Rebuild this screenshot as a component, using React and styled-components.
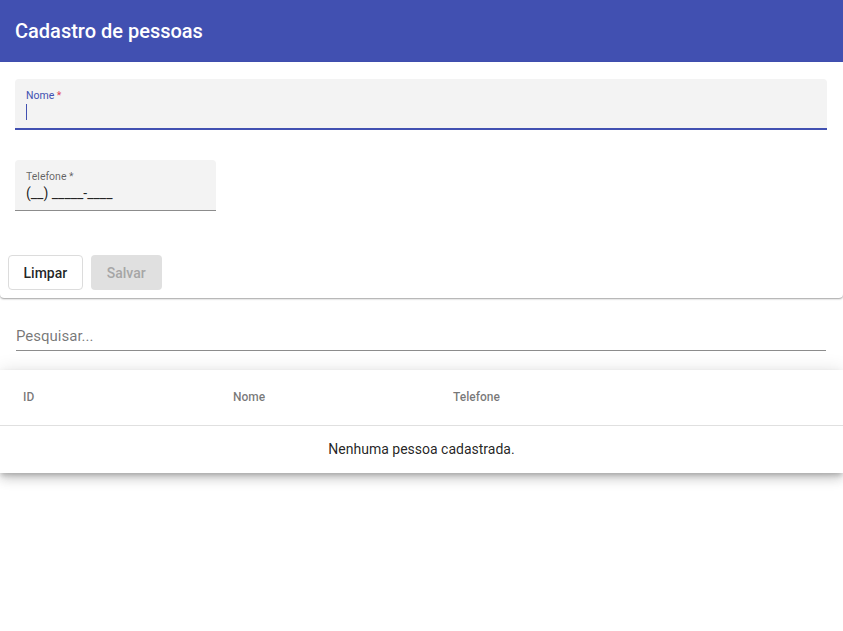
import styled, { createGlobalStyle } from 'styled-components';

const GlobalStyle = createGlobalStyle`
  body {
    margin: 0;
    font-family: Roboto, "Liberation Sans", sans-serif;
    background: #fff;
    color: rgba(0, 0, 0, 0.87);
  }

  #root {
    min-height: 100vh;
  }
`;

function App() {
  return (
    <>
      <GlobalStyle />
      <Header>
        <h1>Cadastro de pessoas</h1>
      </Header>

      <FormPaper>
        <Field $width="812px" $focused>
          <Label $focused>
            Nome <Star $focused>*</Star>
          </Label>
          <Value>
            <Caret />
          </Value>
        </Field>

        <Field $width="201px">
          <Label>
            Telefone <Star>*</Star>
          </Label>
          <Value>(__) _____-____</Value>
        </Field>

        <Actions>
          <Button>Limpar</Button>
          <Button $disabled>Salvar</Button>
        </Actions>
      </FormPaper>

      <Search>
        <span>Pesquisar...</span>
      </Search>

      <TablePaper>
        <HeadRow>
          <div>ID</div>
          <div>Nome</div>
          <div>Telefone</div>
        </HeadRow>
        <EmptyRow>Nenhuma pessoa cadastrada.</EmptyRow>
      </TablePaper>
    </>
  );
}

const Header = styled.header`
  height: 62px;
  background: #4150b1;
  display: flex;
  align-items: center;
  padding: 0 15px;

  h1 {
    margin: 0;
    color: #fff;
    font-size: 20px;
    font-weight: 500;
  }
`;

const FormPaper = styled.div`
  padding: 17px 8px 8px;
  border-radius: 0 0 4px 4px;
  background: #fff;
  box-shadow: 0 1px 1px -1px rgba(0, 0, 0, 0.3), 0 1px 2px rgba(0, 0, 0, 0.35);
  display: flex;
  flex-direction: column;
`;

const Field = styled.div`
  width: ${(p) => p.$width};
  height: 51px;
  box-sizing: border-box;
  margin: 0 0 30px 7px;
  background: #f3f3f3;
  border-radius: 4px 4px 0 0;
  border-bottom: ${(p) => (p.$focused ? '2px solid #4150b1' : '1px solid #8c8c8c')};
  padding: 10px 11px 0;
`;

const Label = styled.div`
  font-size: 10.5px;
  line-height: 13px;
  color: ${(p) => (p.$focused ? '#4150b1' : 'rgba(0, 0, 0, 0.6)')};
`;

const Star = styled.span`
  color: ${(p) => (p.$focused ? '#e0435a' : 'inherit')};
`;

const Value = styled.div`
  font-size: 14px;
  line-height: 18px;
  margin-top: 1px;
  height: 18px;
  color: rgba(0, 0, 0, 0.87);
`;

const Caret = styled.span`
  display: inline-block;
  width: 1px;
  height: 16px;
  margin-top: 1px;
  background: #4150b1;
`;

const Actions = styled.div`
  display: flex;
  gap: 8px;
  margin-top: 14px;
`;

const Button = styled.button`
  height: 35px;
  padding: ${(p) => (p.$disabled ? '0 16px' : '0 14.5px')};
  border-radius: 4px;
  font-family: Roboto, "Liberation Sans", sans-serif;
  font-size: 14px;
  font-weight: 500;
  border: ${(p) => (p.$disabled ? 'none' : '1px solid #dcdcdc')};
  background: ${(p) => (p.$disabled ? '#e0e0e0' : '#fff')};
  color: ${(p) => (p.$disabled ? '#a6a6a6' : 'rgba(0, 0, 0, 0.87)')};
`;

const Search = styled.div`
  margin: 21px 17px 19px 16px;
  height: 32px;
  box-sizing: border-box;
  border-bottom: 1px solid #8c8c8c;
  display: flex;
  align-items: center;
  padding-top: 3px;

  span {
    font-size: 15px;
    color: rgba(0, 0, 0, 0.55);
  }
`;

const TablePaper = styled.div`
  background: #fff;
  box-shadow: 0 3px 5px -1px rgba(0, 0, 0, 0.2), 0 6px 10px rgba(0, 0, 0, 0.14),
    0 1px 18px rgba(0, 0, 0, 0.12);
`;

const HeadRow = styled.div`
  height: 56px;
  box-sizing: border-box;
  padding: 0 0 1px 23px;
  display: grid;
  grid-template-columns: 210px 220px 1fr;
  align-items: center;
  border-bottom: 1px solid #e0e0e0;
  font-size: 12px;
  font-weight: 500;
  color: rgba(0, 0, 0, 0.54);
`;

const EmptyRow = styled.div`
  height: 47px;
  box-sizing: border-box;
  padding-bottom: 1px;
  display: flex;
  align-items: center;
  justify-content: center;
  font-size: 14px;
  color: rgba(0, 0, 0, 0.87);
`;

export default App;
